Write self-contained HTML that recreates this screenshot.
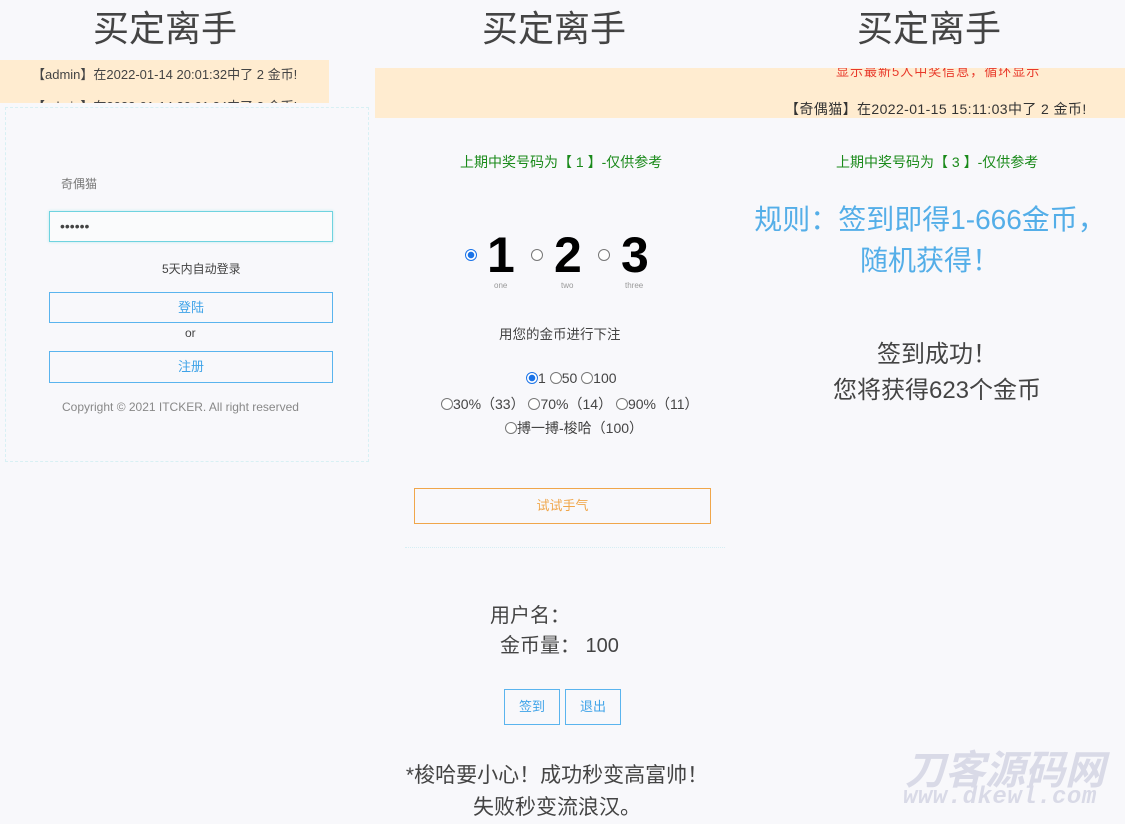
<!DOCTYPE html>
<html><head><meta charset="utf-8"><style>
*{margin:0;padding:0;box-sizing:border-box}
body{width:1125px;height:812px;overflow:hidden;background:#f8f8fb;font-family:"Liberation Sans","Noto Sans CJK SC",sans-serif;color:#444;position:relative}
.a{position:absolute;white-space:nowrap}
.t{font-size:36px;color:#444;top:6px;line-height:46px}
.c{text-align:center}
.btn{position:absolute;border:1px solid #5ab4ee;color:#3fa3e8;font-size:13px;text-align:center;background:transparent}
.rad{display:inline-block;width:12px;height:12px;border:1px solid #777;border-radius:50%;vertical-align:-1px;background:#fff}
.rad.on{border-color:#1a73e8;background:radial-gradient(circle,#1a73e8 0 3px,#fff 3.5px)}
</style></head><body>
<div class="a t" style="left:93px">买定离手</div>
<div class="a t" style="left:482px">买定离手</div>
<div class="a t" style="left:857px">买定离手</div>

<div class="a" style="left:0;top:60px;width:329px;height:43px;background:#ffecd0;overflow:hidden">
 <div class="a" style="left:32px;top:4px;font-size:13px;color:#444">【admin】在2022-01-14 20:01:32中了 2 金币!</div>
 <div class="a" style="left:32px;top:36px;font-size:13px;color:#444">【admin】在2022-01-14 20:01:24中了 2 金币!</div>
</div>
<div class="a" style="left:5px;top:107px;width:364px;height:355px;border:1px dashed #d8f0f4"></div>
<div class="a" style="left:61px;top:175px;font-size:12px;color:#777">奇偶猫</div>
<div class="a" style="left:49px;top:211px;width:284px;height:31px;border:1px solid #6fd3df;box-shadow:0 0 3px #bde9ef;background:#fafbfc"></div>
<div class="a" style="left:60px;top:218px;font-size:14px;color:#444">••••••</div>
<div class="a" style="left:162px;top:260px;font-size:12px;color:#444">5天内自动登录</div>
<div class="btn" style="left:49px;top:292px;width:284px;height:31px;line-height:29px">登陆</div>
<div class="a" style="left:185px;top:326px;font-size:12px;color:#444">or</div>
<div class="btn" style="left:49px;top:351px;width:284px;height:32px;line-height:30px">注册</div>
<div class="a" style="left:62px;top:400px;font-size:12px;color:#888">Copyright © 2021 ITCKER. All right reserved</div>

<div class="a" style="left:375px;top:68px;width:750px;height:50px;background:#ffecd0;overflow:hidden">
 <div class="a" style="left:461px;top:-7px;font-size:13px;color:#e8392b;letter-spacing:1px">显示最新5人中奖信息，循环显示</div>
 <div class="a" style="left:410px;top:31px;font-size:14px;color:#333;letter-spacing:.4px">【奇偶猫】在2022-01-15 15:11:03中了 2 金币!</div>
</div>

<div class="a" style="left:460px;top:152px;font-size:14px;color:#1a8a1a">上期中奖号码为【 1 】-仅供参考</div>
<div class="a" style="left:836px;top:152px;font-size:14px;color:#1a8a1a">上期中奖号码为【 3 】-仅供参考</div>

<span class="a rad on" style="left:465px;top:249px"></span>
<div class="a" style="left:487px;top:228px;font:bold 50px 'Liberation Sans',sans-serif;color:#000;line-height:54px">1</div>
<span class="a rad" style="left:531px;top:249px"></span>
<div class="a" style="left:554px;top:228px;font:bold 50px 'Liberation Sans',sans-serif;color:#000;line-height:54px">2</div>
<span class="a rad" style="left:598px;top:249px"></span>
<div class="a" style="left:621px;top:228px;font:bold 50px 'Liberation Sans',sans-serif;color:#000;line-height:54px">3</div>
<div class="a" style="left:494px;top:281px;font-size:8px;color:#999">one</div>
<div class="a" style="left:561px;top:281px;font-size:8px;color:#999">two</div>
<div class="a" style="left:625px;top:281px;font-size:8px;color:#999">three</div>

<div class="a" style="left:499px;top:323px;font-size:13.5px;color:#444">用您的金币进行下注</div>
<div class="a" style="left:526px;top:370px;font-size:14px"><span class="rad on"></span>1 <span class="rad"></span>50 <span class="rad"></span>100</div>
<div class="a" style="left:441px;top:394px;font-size:14px"><span class="rad"></span>30%（33） <span class="rad"></span>70%（14） <span class="rad"></span>90%（11）</div>
<div class="a" style="left:505px;top:418px;font-size:14px"><span class="rad"></span>搏一搏-梭哈（100）</div>

<div class="a c" style="left:730px;top:199px;width:400px;font-size:28px;color:#54aee8;line-height:41px">规则：签到即得1-666金币，<br>随机获得！</div>
<div class="a c" style="left:787px;top:337px;width:300px;font-size:24px;color:#444;line-height:36px">签到成功！<br>您将获得623个金币</div>

<div class="a" style="left:414px;top:488px;width:297px;height:36px;border:1px solid #f0a64a;color:#f0a64a;font-size:13px;text-align:center;line-height:34px">试试手气</div>
<div class="a" style="left:405px;top:547px;width:320px;border-top:1px dotted #d5eef3"></div>

<div class="a" style="left:490px;top:599px;font-size:20px;color:#444">用户名：</div>
<div class="a" style="left:500px;top:629px;font-size:20px;color:#444">金币量： 100</div>
<div class="btn" style="left:504px;top:689px;width:56px;height:36px;line-height:34px">签到</div>
<div class="btn" style="left:565px;top:689px;width:56px;height:36px;line-height:34px">退出</div>
<div class="a c" style="left:397px;top:760px;width:320px;font-size:21px;color:#444;line-height:32px">*梭哈要小心！成功秒变高富帅！<br>失败秒变流浪汉。</div>

<div class="a" style="left:905px;top:744px;font:italic bold 40px 'Noto Sans CJK SC',sans-serif;color:#d9dae7;line-height:46px">刀客源码网</div>
<div class="a" style="left:903px;top:787px;font:italic bold 24px 'Liberation Mono',monospace;color:#d9dae7;line-height:22px;letter-spacing:.5px">www.dkewl.com</div>
</body></html>
